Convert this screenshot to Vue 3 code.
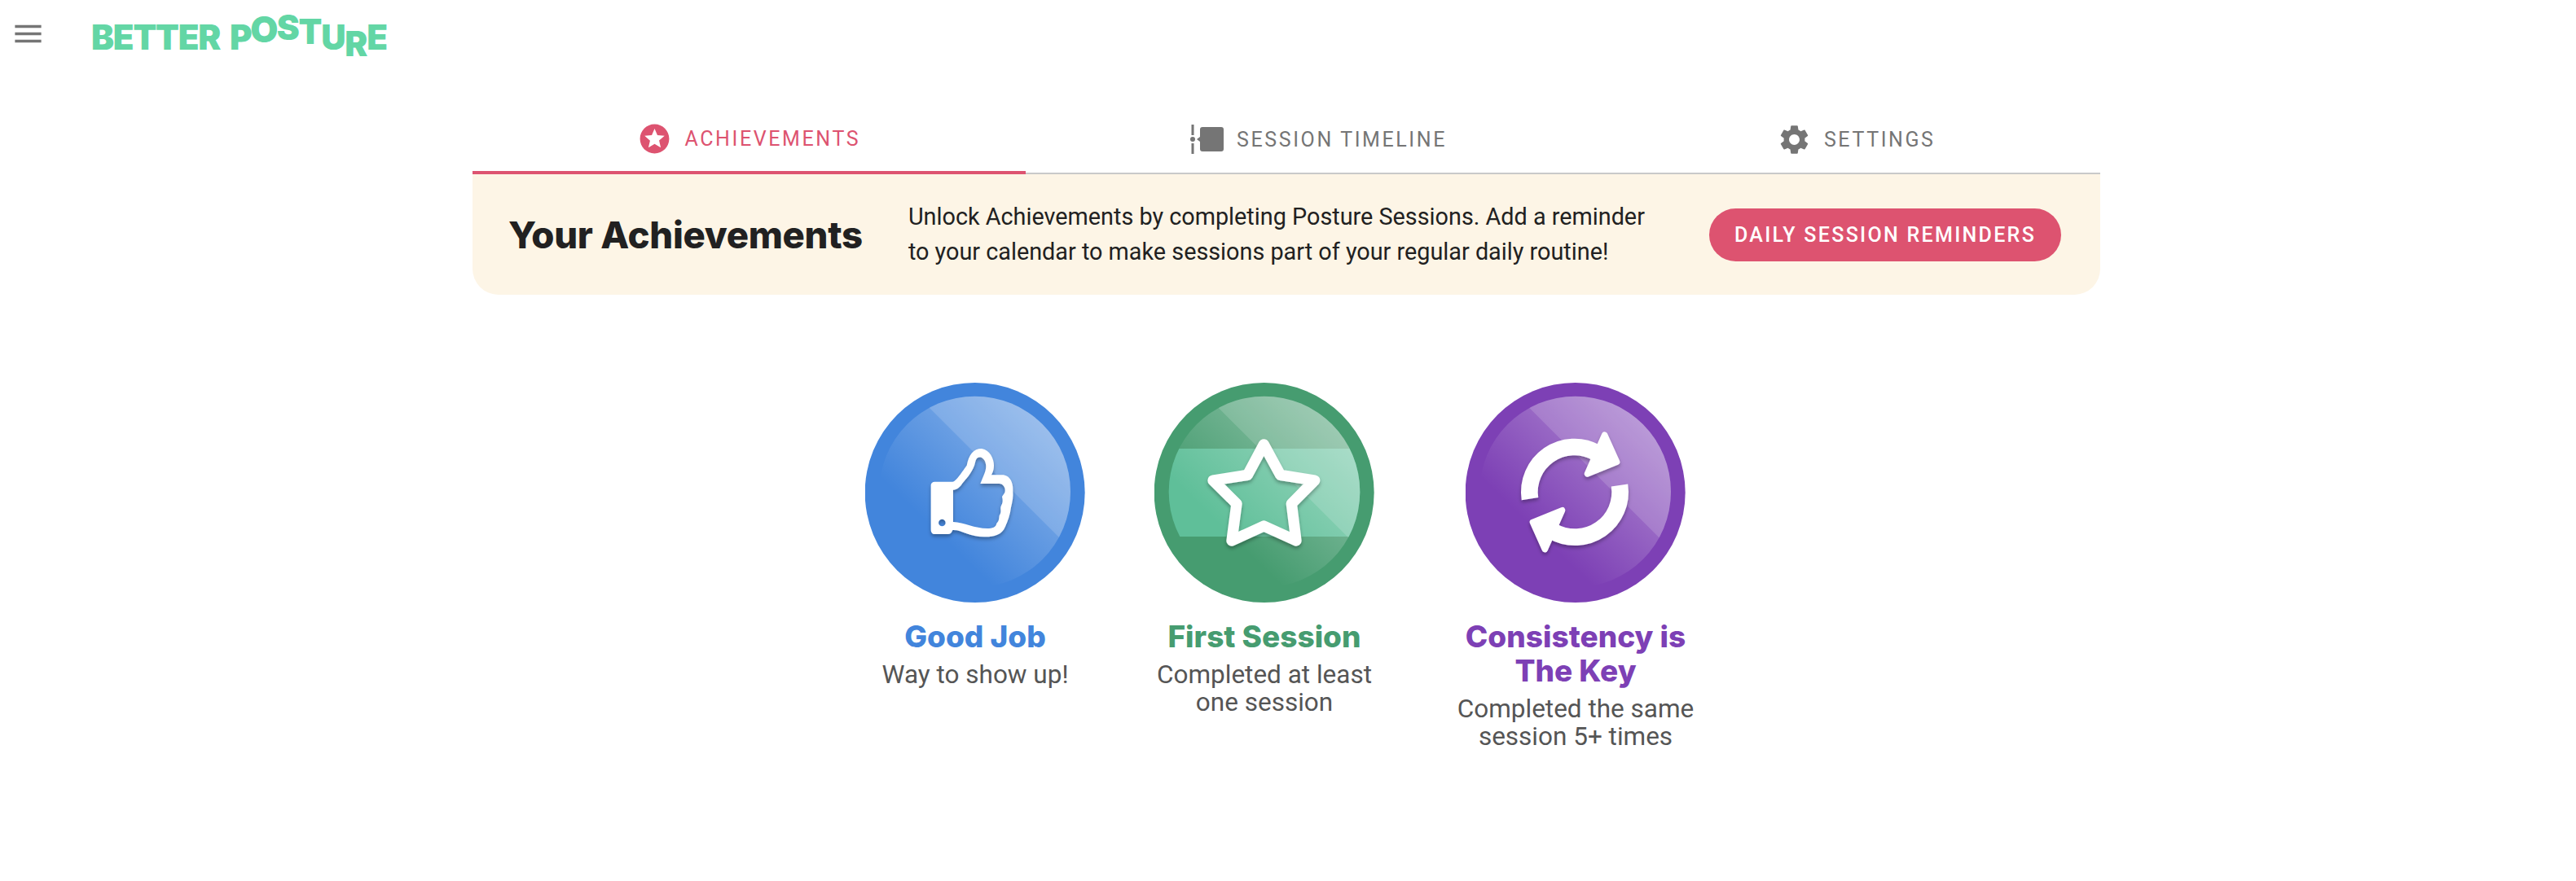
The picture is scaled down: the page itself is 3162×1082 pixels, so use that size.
<template>
  <div class="page">
    <header class="topbar">
      <button class="menu-btn" aria-label="Menu">
        <svg viewBox="0 0 24 24" class="menu-icon"><path d="M3 18h18v-2H3v2zm0-5h18v-2H3v2zm0-7v2h18V6H3z" /></svg>
      </button>
      <div class="logo">
        <span class="logo-word">BETTER</span>
        <span class="logo-word second">
          <span v-for="(l, i) in logoLetters" :key="i" class="logo-letter" :class="l.cls">{{ l.ch }}</span>
        </span>
      </div>
    </header>

    <main class="content">
      <nav class="tabs">
        <a class="tab active">
          <svg viewBox="0 0 24 24" class="tab-icon star-icon"><path d="M11.99 2C6.47 2 2 6.48 2 12s4.47 10 9.99 10C17.52 22 22 17.52 22 12S17.52 2 11.99 2zm4.24 16L12 15.45 7.77 18l1.12-4.81-3.73-3.23 4.92-.42L12 5l1.92 4.53 4.92.42-3.73 3.23L16.23 18z" /></svg>
          <span>ACHIEVEMENTS</span>
        </a>
        <a class="tab">
          <svg viewBox="0 0 42 36" class="timeline-icon">
            <rect x="1.5" y="0" width="3" height="13" />
            <rect x="1.5" y="23" width="3" height="13" />
            <circle cx="3" cy="18" r="3" />
            <path d="M15 3h23a3 3 0 0 1 3 3v24a3 3 0 0 1-3 3H15a3 3 0 0 1-3-3v-9l-4-3 4-3V6a3 3 0 0 1 3-3z" />
          </svg>
          <span>SESSION TIMELINE</span>
        </a>
        <a class="tab">
          <svg viewBox="0 0 24 24" class="tab-icon"><path d="M19.14 12.94c.04-.3.06-.61.06-.94 0-.32-.02-.64-.07-.94l2.03-1.58c.18-.14.23-.41.12-.61l-1.92-3.32c-.12-.22-.37-.29-.59-.22l-2.39.96c-.5-.38-1.03-.7-1.62-.94l-.36-2.54c-.04-.24-.24-.41-.48-.41h-3.84c-.24 0-.43.17-.47.41l-.36 2.54c-.59.24-1.13.57-1.62.94l-2.39-.96c-.22-.08-.47 0-.59.22L2.74 8.87c-.12.21-.08.47.12.61l2.03 1.58c-.05.3-.09.63-.09.94s.02.64.07.94l-2.03 1.58c-.18.14-.23.41-.12.61l1.92 3.32c.12.22.37.29.59.22l2.39-.96c.5.38 1.03.7 1.62.94l.36 2.54c.05.24.24.41.48.41h3.84c.24 0 .44-.17.47-.41l.36-2.54c.59-.24 1.13-.56 1.62-.94l2.39.96c.22.08.47 0 .59-.22l1.92-3.32c.12-.22.07-.47-.12-.61l-2.01-1.58zM12 15.6c-1.98 0-3.6-1.62-3.6-3.6s1.62-3.6 3.6-3.6 3.6 1.62 3.6 3.6-1.62 3.6-3.6 3.6z" /></svg>
          <span>SETTINGS</span>
        </a>
      </nav>

      <section class="banner">
        <h1 class="banner-title">Your Achievements</h1>
        <p class="banner-text">Unlock Achievements by completing Posture Sessions. Add a reminder to your calendar to make sessions part of your regular daily routine!</p>
        <button class="reminder-btn">DAILY SESSION REMINDERS</button>
      </section>

      <section class="badges">
        <!-- Good Job -->
        <article class="badge">
          <svg class="badge-art" viewBox="66 60 810 810">
            <defs>
              <clipPath id="blue-inner"><circle cx="470" cy="462" r="352" /></clipPath>
              <linearGradient id="shine" x1="1" y1="0" x2="0" y2="1">
                <stop offset="0.05" stop-color="#fff" stop-opacity="0.45" />
                <stop offset="0.7" stop-color="#fff" stop-opacity="0" />
              </linearGradient>
              <filter id="soft" x="-20%" y="-20%" width="140%" height="140%">
                <feDropShadow dx="0" dy="9" stdDeviation="6" flood-color="#000" flood-opacity="0.3" />
              </filter>
            </defs>
            <circle cx="470" cy="465" r="405" fill="#4285dc" />
            <g clip-path="url(#blue-inner)">
              <rect x="100" y="100" width="740" height="720" fill="url(#shine)" />
              <polygon points="155,5 900,750 900,5" fill="#fff" opacity="0.15" />
            </g>
            <path filter="url(#soft)" fill="#fff" fill-rule="evenodd" d="M322 425H388C400 425 425 385 440 365C448 325 465 303 495 303C525 308 540 340 540 365C540 380 535 395 530 400H570C600 400 612 430 610 460C612 480 608 500 603 520C600 545 592 570 582 590C570 620 540 628 510 628C450 630 420 600 388 603C385 612 380 618 370 618H322C314 618 308 612 308 600V437C308 430 314 425 322 425ZM390 455C405 455 415 445 425 430C445 405 465 385 472 350C475 335 490 330 500 340C512 350 515 375 505 395L490 432H560C575 432 585 450 580 465L570 480C572 490 575 500 566 515C562 525 570 535 560 550C558 560 560 570 550 578C548 592 535 597 515 597C470 597 430 575 390 573ZM349 563A13 13 0 1 0 349.1 589A13 13 0 1 0 349 563Z" />
          </svg>
          <h2 class="badge-title blue">Good Job</h2>
          <p class="badge-desc">Way to show up!</p>
        </article>

        <!-- First Session -->
        <article class="badge">
          <svg class="badge-art" viewBox="82 60 810 810">
            <defs>
              <clipPath id="green-inner"><circle cx="487" cy="462" r="352" /></clipPath>
            </defs>
            <circle cx="486" cy="465" r="405" fill="#469c70" />
            <g clip-path="url(#green-inner)">
              <rect x="100" y="303" width="800" height="324" fill="#5fbf99" />
              <rect x="117" y="100" width="740" height="720" fill="url(#shine)" />
              <polygon points="170,5 915,750 915,5" fill="#fff" opacity="0.15" />
            </g>
            <polygon filter="url(#soft)" fill="none" stroke="#fff" stroke-width="40" stroke-linejoin="round" points="485,288 546,400 672,420 587,506 604,642 485,588 367,642 385,506 298,420 425,400" />
          </svg>
          <h2 class="badge-title green">First Session</h2>
          <p class="badge-desc">Completed at least one session</p>
        </article>

        <!-- Consistency is The Key -->
        <article class="badge wide">
          <svg class="badge-art" viewBox="88 60 810 810">
            <defs>
              <clipPath id="purple-inner"><circle cx="492" cy="462" r="352" /></clipPath>
            </defs>
            <circle cx="492" cy="465" r="405" fill="#7d40b5" />
            <g clip-path="url(#purple-inner)">
              <rect x="122" y="100" width="740" height="720" fill="url(#shine)" />
              <polygon points="175,5 920,750 920,5" fill="#fff" opacity="0.15" />
            </g>
            <g filter="url(#soft)">
              <g id="refresh-half">
                <path d="M325 488A166 166 0 0 1 570 318" fill="none" stroke="#fff" stroke-width="62" />
                <polygon points="600,252 645,352 536,396" fill="#fff" stroke="#fff" stroke-width="22" stroke-linejoin="round" />
              </g>
              <use href="#refresh-half" transform="rotate(180 490 463)" />
            </g>
          </svg>
          <h2 class="badge-title purple">Consistency is The Key</h2>
          <p class="badge-desc">Completed the same session 5+ times</p>
        </article>
      </section>
    </main>
  </div>
</template>

<script setup>
const logoLetters = [
  { ch: 'P', cls: '' },
  { ch: 'O', cls: 'up-o' },
  { ch: 'S', cls: 'up-s' },
  { ch: 'T', cls: 'up-t' },
  { ch: 'U', cls: '' },
  { ch: 'R', cls: 'down-r' },
  { ch: 'E', cls: '' }
]
</script>

<style>
html,
body {
  margin: 0;
  background: #ffffff;
}
</style>

<style scoped>
.page {
  min-height: 1082px;
  font-family: Roboto, "Liberation Sans", sans-serif;
  background: #ffffff;
}

.topbar {
  display: flex;
  align-items: flex-start;
  height: 130px;
}

.menu-btn {
  padding: 20px 0 0 13px;
  border: none;
  background: none;
  width: 112px;
  text-align: left;
  flex: none;
}

.menu-icon {
  display: block;
  width: 43px;
  height: 43px;
  fill: #757575;
}

.logo {
  display: flex;
  gap: 12px;
  margin-top: 22px;
  font-family: Inter, "Liberation Sans", sans-serif;
  font-weight: 900;
  font-size: 42px;
  line-height: 48px;
  color: #63d6a5;
  letter-spacing: -1.2px;
}

.logo-word.second {
  display: flex;
}

.logo-letter {
  display: inline-block;
}

.up-o { transform: translateY(-10px) scale(1.05); }
.up-s { transform: translateY(-12px); }
.up-t { transform: translateY(-7px); }
.down-r { transform: translateY(8px); }

.content {
  width: 1998px;
  margin-left: 580px;
}

.tabs {
  display: flex;
  border-bottom: 2px solid #c9c9c9;
  height: 82px;
}

.tab {
  flex: 1 1 auto;
  display: flex;
  align-items: center;
  justify-content: center;
  gap: 15px;
  height: 82px;
  box-sizing: border-box;
  color: #757575;
  font-size: 25px;
  letter-spacing: 2.6px;
  font-weight: 400;
}

.tab.active {
  color: #dd5370;
  border-bottom: 4px solid #dd5370;
  height: 84px;
}

.tab-icon {
  width: 43px;
  height: 43px;
  fill: #757575;
}

.star-icon {
  fill: #dd5370;
}

.timeline-icon {
  width: 42px;
  height: 36px;
  fill: #757575;
}

.banner {
  display: flex;
  align-items: center;
  justify-content: space-between;
  height: 148px;
  box-sizing: border-box;
  padding: 0 48px 0 44px;
  background: #fdf5e6;
  border-radius: 0 0 32px 32px;
}

.banner-title {
  margin: 0;
  font-family: Inter, "Liberation Sans", sans-serif;
  font-size: 45.5px;
  font-weight: 800;
  letter-spacing: -0.3px;
  white-space: nowrap;
  color: #212121;
}

.banner-text {
  margin: 0 12px 0 0;
  width: 915px;
  font-size: 28.8px;
  line-height: 43px;
  color: #212121;
}

.reminder-btn {
  width: 432px;
  height: 65px;
  border: none;
  border-radius: 33px;
  background: #dd5370;
  color: #ffffff;
  font-family: Roboto, sans-serif;
  font-size: 25px;
  font-weight: 500;
  letter-spacing: 2.3px;
}

.badges {
  display: flex;
  justify-content: center;
  gap: 85px;
  margin-top: 108px;
}

.badge {
  width: 270px;
  text-align: center;
}

.badge.wide {
  width: 324px;
}

.badge-art {
  display: block;
  width: 270px;
  height: 270px;
  margin: 0 auto;
}

.badge-title {
  margin: 21px 0 9px;
  font-family: Inter, "Liberation Sans", sans-serif;
  font-size: 37px;
  line-height: 42px;
  font-weight: 800;
}

.badge.wide .badge-title {
  padding: 0 20px;
}

.blue { color: #4285dc; }
.green { color: #469c70; }
.purple { color: #7d40b5; }

.badge-desc {
  margin: 0;
  font-size: 31.5px;
  line-height: 34px;
  color: #555555;
}
</style>
